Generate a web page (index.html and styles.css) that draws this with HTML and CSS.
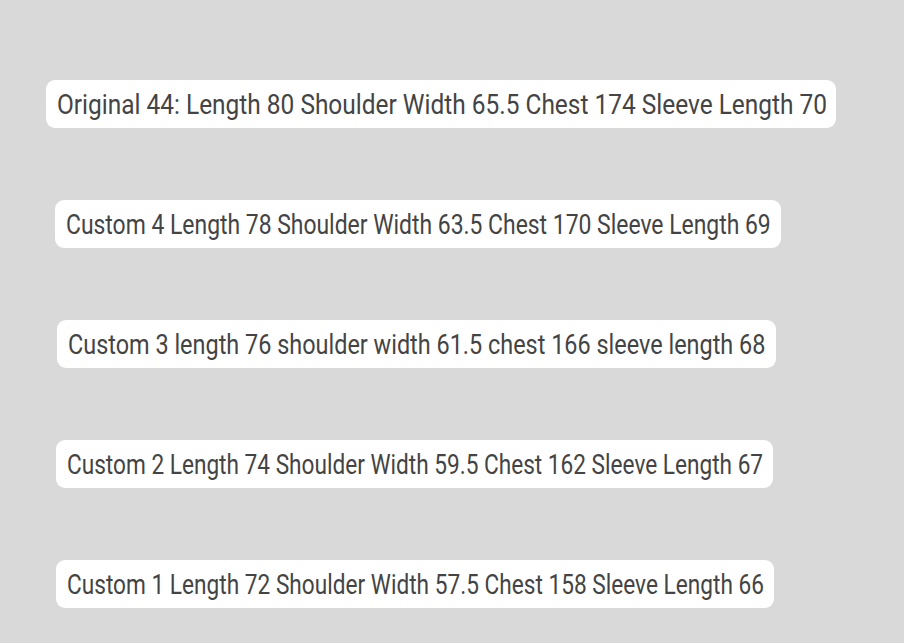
FILE: index.html
```html
<!DOCTYPE html>
<html>
<head>
<meta charset="utf-8">
<link rel="stylesheet" href="styles.css">
</head>
<body>
<div class="list">
  <div class="row r1"><div class="pill"><span class="txt">Original 44: Length 80 Shoulder Width 65.5 Chest 174 Sleeve Length 70</span></div></div>
  <div class="row r2"><div class="pill"><span class="txt">Custom 4 Length 78 Shoulder Width 63.5 Chest 170 Sleeve Length 69</span></div></div>
  <div class="row r3"><div class="pill"><span class="txt">Custom 3 length 76 shoulder width 61.5 chest 166 sleeve length 68</span></div></div>
  <div class="row r4"><div class="pill"><span class="txt">Custom 2 Length 74 Shoulder Width 59.5 Chest 162 Sleeve Length 67</span></div></div>
  <div class="row r5"><div class="pill"><span class="txt">Custom 1 Length 72 Shoulder Width 57.5 Chest 158 Sleeve Length 66</span></div></div>
</div>
</body>
</html>
```
FILE: styles.css
```css
html, body {
  margin: 0;
  padding: 0;
  background: #d9d9d9;
  width: 904px;
  height: 643px;
  overflow: hidden;
}
.list {
  display: flex;
  flex-direction: column;
  gap: 72px;
  padding-top: 80px;
}
.row {
  display: flex;
  height: 48px;
}
.pill {
  display: flex;
  align-items: center;
  background: #ffffff;
  border-radius: 9px;
  padding: 0 11px;
  font-family: Roboto, "Liberation Sans", sans-serif;
  font-size: 28px;
  color: #444444;
  white-space: nowrap;
}
.txt {
  display: inline-block;
  transform: scaleX(0.81);
  transform-origin: left center;
}
.r1 { margin-left: 46px; }
.r1 .pill { width: 768px; }
.r1 .txt { transform: scaleX(0.873); }
.r2 { margin-left: 55px; }
.r2 .pill { width: 704px; }
.r2 .txt { transform: scaleX(0.818); }
.r3 { margin-left: 57px; }
.r3 .pill { width: 697px; }
.r3 .txt { transform: scaleX(0.837); }
.r4 { margin-left: 56px; }
.r4 .pill { width: 695px; }
.r4 .txt { transform: scaleX(0.808); }
.r5 { margin-left: 56px; }
.r5 .pill { width: 696px; }
.r5 .txt { transform: scaleX(0.809); }
```
